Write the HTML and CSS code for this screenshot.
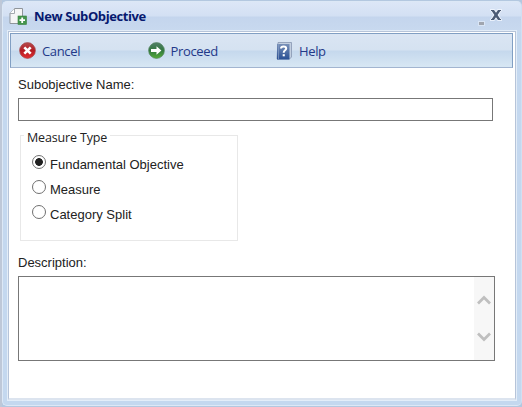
FILE: index.html
```html
<!DOCTYPE html>
<html lang="en">
<head>
<meta charset="utf-8">
<title>New SubObjective</title>
<link rel="stylesheet" href="styles.css">
</head>
<body>
<div class="window">
  <header class="titlebar">
    <svg class="doc-icon" width="18" height="18" viewBox="0 0 18 18">
      <path d="M5.500 1.500h8v15H1V6.500z" fill="#f5f5f5" stroke="#8f959b"/>
      <path d="M5.500 1.500v5H1" fill="#fff" stroke="#a3a8ad"/>
      <rect x="9" y="9" width="8.500" height="8.500" fill="#43944c" stroke="#398240" stroke-width=".6"/>
      <path d="M13.200 10.500v5.500M10.500 13.200h5.500" stroke="#fff" stroke-width="1.800"/>
    </svg>
    <h1 class="title">New SubObjective</h1>
    <span class="minimize"></span>
    <svg class="close" width="12" height="12" viewBox="0 0 12 12">
      <path d="M1 1h3l2 2.700L8 1h3L7.600 6 11 11H8L6 8.300 4 11H1l3.400-5z" fill="#4d5c75" stroke="#f5f9ff" stroke-width="1.600" paint-order="stroke"/>
      <path d="M1 1.500h3M8 1.500h3M1 10.500h3M8 10.500h3" stroke="#4d5c75"/>
    </svg>
  </header>
  <main class="content">
    <nav class="toolbar">
      <a class="tool cancel">
        <svg width="17" height="17" viewBox="0 0 17 17">
          <defs><linearGradient id="red" x2="0" y2="1"><stop stop-color="#b64b4d"/><stop offset=".5" stop-color="#b31c24"/><stop offset="1" stop-color="#e22f32"/></linearGradient></defs>
          <circle cx="8.500" cy="8.500" r="7.900" fill="url(#red)" stroke="#a5494c" stroke-width=".7"/>
          <path d="M5.300 5.300l6.400 6.400M11.700 5.300l-6.400 6.400" stroke="#fff" stroke-width="2.600"/>
        </svg>
        <span>Cancel</span>
      </a>
      <a class="tool proceed">
        <svg width="17" height="17" viewBox="0 0 17 17">
          <defs><linearGradient id="green" x2="0" y2="1"><stop stop-color="#527f68"/><stop offset=".5" stop-color="#32783f"/><stop offset="1" stop-color="#55ad38"/></linearGradient></defs>
          <circle cx="8.500" cy="8.500" r="7.900" fill="url(#green)" stroke="#568761" stroke-width=".7"/>
          <path d="M3 7h5.500V4.300l4.900 4.200-4.900 4.200V10H3z" fill="#fff"/>
        </svg>
        <span>Proceed</span>
      </a>
      <a class="tool help">
        <svg width="17" height="18" viewBox="0 0 17 18">
          <defs><linearGradient id="blue" x2="0" y2="1"><stop stop-color="#7890b8"/><stop offset="1" stop-color="#294f94"/></linearGradient></defs>
          <path d="M2 .5h13.500v14.500l-2 2H1z" fill="#c3cfe0" stroke="#8795b1" stroke-width=".8"/>
          <path d="M1 2h12.500v15.500H1z" fill="url(#blue)"/>
          <path d="M2.500 2v15" stroke="#8299c0" stroke-width=".8"/>
          <path d="M5 6.500C5 3.800 10.200 3.800 10.200 6.500 10.200 8.300 7.700 8.300 7.700 10.700" fill="none" stroke="#fff" stroke-width="2"/>
          <rect x="6.700" y="12.200" width="2.100" height="2.100" fill="#fff"/>
        </svg>
        <span>Help</span>
      </a>
    </nav>
    <form class="form">
      <label class="label" for="name">Subobjective Name:</label>
      <input class="name" id="name" type="text">
      <fieldset class="types">
        <legend>Measure Type</legend>
        <label class="choice"><input type="radio" name="type" checked><span>Fundamental Objective</span></label>
        <label class="choice"><input type="radio" name="type"><span>Measure</span></label>
        <label class="choice"><input type="radio" name="type"><span>Category Split</span></label>
      </fieldset>
      <label class="label desc-label">Description:</label>
      <div class="description">
        <div class="scroll">
          <svg width="14" height="10" viewBox="0 0 14 10"><path d="M1 8.500l6-6 6 6" fill="none" stroke="#bfbfbf" stroke-width="2.700"/></svg>
          <svg width="14" height="10" viewBox="0 0 14 10"><path d="M1 1.500l6 6 6-6" fill="none" stroke="#bfbfbf" stroke-width="2.700"/></svg>
        </div>
      </div>
    </form>
  </main>
</div>
</body>
</html>
```
FILE: styles.css
```css
* { box-sizing: border-box; }
body {
  margin: 0;
  height: 407px;
  padding: 1px 0 1px 2px;
  overflow: hidden;
  background: linear-gradient(90deg, #bec8d8 0 2px, #b3c8e0 2px);
  font-family: "Liberation Sans", Arial, sans-serif;
  color: #222;
}
.window {
  height: 405px;
  display: flex;
  flex-direction: column;
  padding: 0 5px 5px 5px;
  border: 1px solid #dce8f6;
  border-right-color: #d0e0f3;
  border-radius: 5px;
  background: linear-gradient(#dce7f7 0, #d3e0f3 14px, #c4d5ed 15px, #c8d9ef 29px, #c4d8ef 31px);
}
.titlebar {
  flex: 0 0 29px;
  display: flex;
  align-items: flex-start;
  padding: 5px 14px 0 1px;
}
.doc-icon { flex: none; }
.title {
  margin: -1px 0 0 7px;
  font: bold 13px/20px "Open Sans", sans-serif;
  letter-spacing: -.4px;
  color: #07196f;
}
.minimize {
  width: 5px;
  height: 3px;
  margin: 15px 6px 0 auto;
  background: #a0a5af;
  box-shadow: 0 0 0 1px #d9e5f5;
}
.close { margin-top: 2px; }
.content {
  flex: 1;
  border: 1px solid #b6c4d9;
  outline: 1px solid #e3edf8;
  border-bottom: 2px solid #dce4ef;
  padding: 1px 2px 0 1px;
  background: #fff;
}
.toolbar {
  height: 35px;
  display: grid;
  grid-template-columns: 128.5px 128.5px 1fr;
  align-items: center;
  padding-left: 8px;
  border: 1px solid #819fc3;
  border-bottom-color: #a2b5d0;
  background: linear-gradient(#dae5f3 0, #d5e2f1 16px, #c5d8ed 17px, #d6e6f3 32px);
}
.tool {
  display: flex;
  align-items: center;
  gap: 6px;
  font: 13px/20px "Open Sans", sans-serif;
  letter-spacing: -.35px;
  color: #233989;
}
.form {
  display: flex;
  flex-direction: column;
  align-items: flex-start;
  padding: 9px 0 0 8px;
}
.label { font-size: 13px; line-height: 16px; }
.name {
  width: 475px;
  height: 23px;
  margin: 5px 0 0;
  padding: 2px;
  border: 1px solid #777;
  outline: none;
  background: #fff;
}
.types {
  width: 218px;
  height: 112px;
  margin: 8px 0 0 2px;
  padding: 13px 0 0 11px;
  border: 1px solid #e8e8e8;
}
.types legend {
  height: 13px;
  margin-left: -8px;
  padding: 0 3px;
  font: 12.5px/17px "Open Sans", sans-serif;
  letter-spacing: -.15px;
}
.choice {
  display: flex;
  height: 25px;
  font-size: 13px;
  line-height: 18px;
}
.choice input {
  appearance: none;
  flex: none;
  width: 14px;
  height: 14px;
  margin: 0 4px 0 0;
  border: 1px solid #707070;
  border-radius: 50%;
  background: #fff;
}
.choice input:checked { background: radial-gradient(circle, #202020 0 3.500px, #fff 4.200px); }
.choice span { padding-top: 1px; }
.desc-label { margin-top: 14px; }
.description {
  width: 477px;
  height: 85px;
  margin-top: 5px;
  display: flex;
  justify-content: flex-end;
  border: 1px solid #777;
}
.scroll {
  width: 20px;
  display: flex;
  flex-direction: column;
  align-items: center;
  gap: 27px;
  padding-top: 18px;
  background: #f7f7f7;
}
```
